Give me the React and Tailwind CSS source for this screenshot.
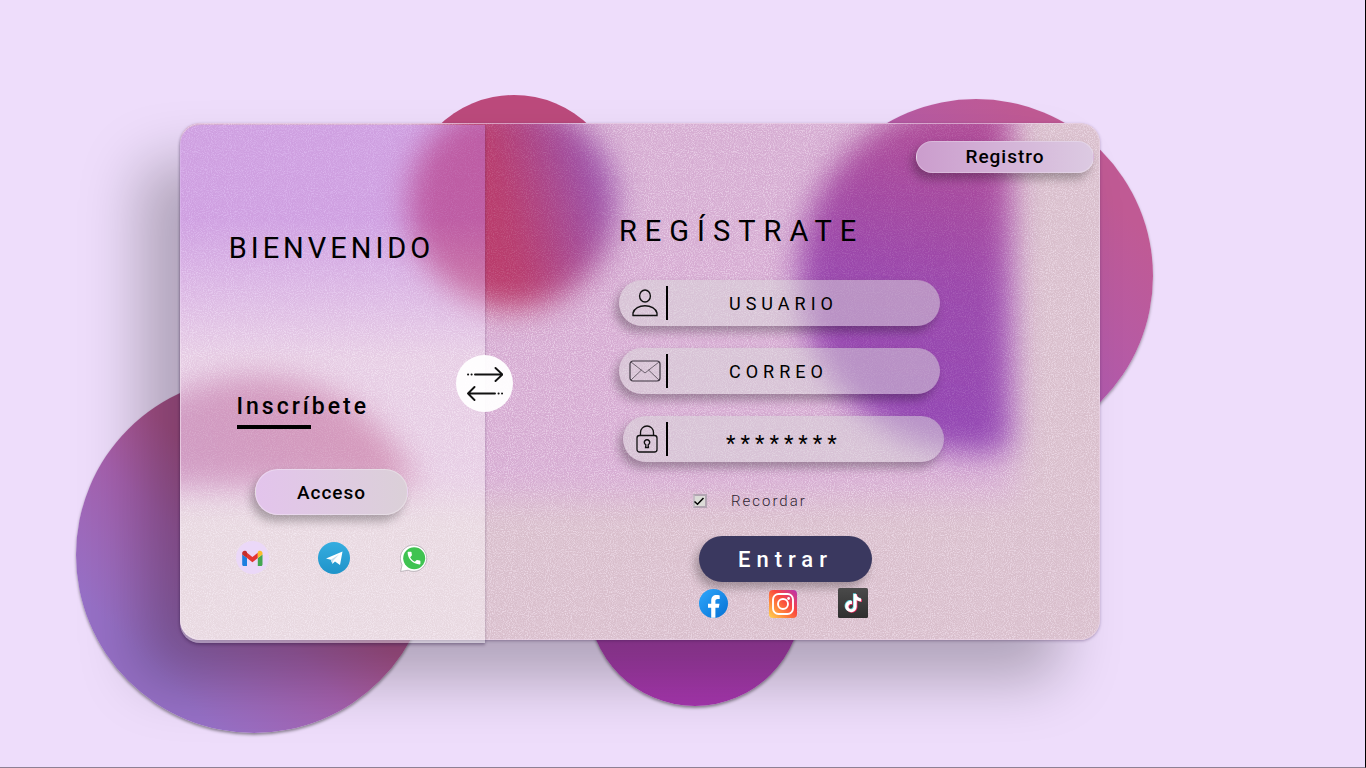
import React from "react";

const TIKTOK =
  "M12.525.02c1.31-.02 2.61-.01 3.91-.02.08 1.53.63 3.09 1.75 4.17 1.12 1.11 2.7 1.62 4.24 1.79v4.03c-1.44-.05-2.89-.35-4.2-.97-.57-.26-1.1-.59-1.62-.93-.01 2.92.01 5.84-.02 8.75-.08 1.4-.54 2.79-1.35 3.94-1.31 1.92-3.58 3.17-5.91 3.21-1.43.08-2.86-.31-4.08-1.03-2.02-1.19-3.44-3.37-3.65-5.71-.02-.5-.03-1-.01-1.49.18-1.9 1.12-3.72 2.58-4.96 1.66-1.44 3.98-2.13 6.15-1.72.02 1.48-.04 2.96-.04 4.44-.99-.32-2.15-.23-3.02.37-.63.41-1.11 1.04-1.36 1.75-.21.51-.15 1.07-.14 1.61.24 1.64 1.82 3.02 3.5 2.87 1.12-.01 2.19-.66 2.77-1.61.19-.33.4-.67.41-1.06.1-1.79.06-3.57.07-5.36.01-4.03-.01-8.05.02-12.07z";

// Frosted glass: blurred colour blobs under a fine white grain.
function Glass() {
  return (
    <div className="absolute inset-0 overflow-hidden rounded-[20px]" aria-hidden="true">
      <svg className="h-full w-full" viewBox="0 0 920 517" preserveAspectRatio="none">
        <defs>
          <filter id="soft" x="-20%" y="-20%" width="140%" height="140%" colorInterpolationFilters="sRGB">
            <feGaussianBlur stdDeviation="15" />
          </filter>
          <filter id="grain" x="0" y="0" width="100%" height="100%" colorInterpolationFilters="sRGB">
            <feTurbulence type="fractalNoise" baseFrequency="0.95" numOctaves="2" seed="4" />
            <feColorMatrix values="0 0 0 0 1  0 0 0 0 0.95  0 0 0 0 1  2.4 0 0 0 -1" />
          </filter>
          <linearGradient id="g1" x1="0.15" y1="0.65" x2="0.95" y2="0.45">
            <stop offset="0.4" stopColor="#b93c6c" />
            <stop offset="1" stopColor="#9a52ab" />
          </linearGradient>
          <linearGradient id="g2" x1="0.6" y1="0" x2="0.4" y2="1">
            <stop offset="0.05" stopColor="#b04b94" />
            <stop offset="0.55" stopColor="#9a48ac" />
            <stop offset="1" stopColor="#9247b4" />
          </linearGradient>
          <linearGradient id="g3" x1="0" y1="1" x2="1" y2="0.6">
            <stop offset="0" stopColor="#a24f9f" />
            <stop offset="1" stopColor="#b34683" />
          </linearGradient>
          <clipPath id="c2"><rect x="500" y="-60" width="330" height="392" /></clipPath>
          <clipPath id="c3"><rect x="-120" y="200" width="500" height="163" /></clipPath>
        </defs>
        <rect width="920" height="517" fill="#d9bfcc" />
        <rect x="-40" y="-40" width="875" height="415" fill="#d49ed8" opacity="0.55" filter="url(#soft)" />
        <rect width="920" height="517" filter="url(#grain)" opacity="0.45" />
        <circle cx="332" cy="81" r="104" fill="url(#g1)" filter="url(#soft)" />
        <g filter="url(#soft)">
          <circle cx="795" cy="153" r="177" fill="url(#g2)" clipPath="url(#c2)" />
        </g>
        <g filter="url(#soft)" opacity="0.85">
          <circle cx="73" cy="431" r="178" fill="url(#g3)" clipPath="url(#c3)" />
        </g>
        <rect width="920" height="517" filter="url(#grain)" opacity="0.14" />
        <rect x="0.5" y="0.5" width="919" height="516" rx="20" fill="none" stroke="#ecd5ea" strokeOpacity="0.6" />
      </svg>
    </div>
  );
}

function UserIcon() {
  return (
    <svg width="28" height="28" viewBox="0 0 28 28" fill="none" stroke="#111" strokeWidth="1.4" aria-hidden="true">
      <ellipse cx="14" cy="7" rx="5.4" ry="6" />
      <path d="M2 26.5v-2.5c1.2-4.6 6.300-7.300 12-7.300s10.800 2.700 12 7.300v2.500z" />
    </svg>
  );
}

function MailIcon() {
  return (
    <svg width="32" height="22" viewBox="0 0 32 22" fill="none" stroke="#3d3540" aria-hidden="true">
      <rect x="1" y="1" width="30" height="20" rx="3" strokeWidth="1.2" />
      <path d="M2 2l14 11L30 2M2 20l10.500-10M30 20L19.500 10" strokeWidth="0.7" />
    </svg>
  );
}

function LockIcon() {
  return (
    <svg width="22" height="28" viewBox="0 0 22 28" fill="none" stroke="#111" strokeWidth="1.3" aria-hidden="true">
      <rect x="1" y="10.500" width="20" height="16.500" rx="2.500" />
      <path d="M4.500 10.500V7.500a6.500 6.500 0 0 1 13 0v3" />
      <path d="M9.800 19.800a2.700 2.700 0 1 1 2.400 0l.2 2.700H9.600z" strokeWidth="1.4" />
    </svg>
  );
}

function GmailIcon() {
  return (
    <svg width="33" height="33" viewBox="0 0 33 33" aria-hidden="true">
      <circle cx="16.500" cy="16.500" r="16.500" fill="#ebd8f8" />
      <path d="M6.200 13.500l4.800 3.600v8H7.700c-.9 0-1.500-.6-1.500-1.500z" fill="#1e7fe0" />
      <path d="M26.500 13.500L21.800 17v8.100H25c.9 0 1.500-.6 1.500-1.500z" fill="#43a751" />
      <path d="M11 11.800l5.400 4.200 5.400-4.200V17l-5.400 4.300L11 17z" fill="#e53530" />
      <path d="M6.200 12c0-2.100 2.300-3 3.800-1.900l1 .8V17l-4.800-3.500z" fill="#c42d2d" />
      <path d="M26.500 12c0-2.100-2.300-3-3.800-1.900l-.9.8V17l4.700-3.500z" fill="#f9bd2c" />
    </svg>
  );
}

function TelegramIcon() {
  return (
    <svg width="32" height="32" viewBox="0 0 32 32" aria-hidden="true">
      <defs>
        <linearGradient id="tg" x1="0" y1="0" x2="0" y2="1">
          <stop stopColor="#35ade0" /><stop offset="1" stopColor="#1f93c9" />
        </linearGradient>
      </defs>
      <circle cx="16" cy="16" r="16" fill="url(#tg)" />
      <path d="M8 16.500L24.500 9.500 22 23l-5-3.500-2.500 2.300-1.700-4z" fill="#fff" />
      <path d="M12.700 17.800L21 12.500l-6 6.400-.5 3z" fill="#c9dfee" />
    </svg>
  );
}

function WhatsappIcon() {
  return (
    <svg width="28" height="28" viewBox="0 0 28 28" aria-hidden="true">
      <path d="M.6 27.500l1.500-6.700A13.200 13.200 0 1 1 8 26.200z" fill="#fff" stroke="#9a929a" strokeWidth="0.6" />
      <circle cx="14.200" cy="14.200" r="11" fill="#3fc351" />
      <path
        transform="translate(5.500 5.500) scale(.71)"
        d="M6.62 10.79c1.440 2.830 3.760 5.140 6.590 6.590l2.200-2.200c.27-.27.67-.36 1.020-.24 1.120.37 2.330.57 3.570.57.55 0 1 .45 1 1V20c0 .55-.45 1-1 1-9.390 0-17-7.610-17-17 0-.55.45-1 1-1h3.500c.55 0 1 .45 1 1 0 1.250.2 2.450.57 3.570.11.35.03.74-.25 1.020z"
        fill="#fff"
      />
    </svg>
  );
}

function FacebookIcon() {
  return (
    <svg width="29" height="29" viewBox="0 0 29 29" aria-hidden="true">
      <defs>
        <linearGradient id="fb" x1="0.1" y1="0.1" x2="0.9" y2="0.9">
          <stop stopColor="#2ba2f8" /><stop offset="1" stopColor="#0a76d8" />
        </linearGradient>
      </defs>
      <circle cx="14.500" cy="14.500" r="14.500" fill="url(#fb)" />
      <path d="M12.200 28.800V18.700H9v-4h3.200v-2.900c0-3.700 2-5.700 5.300-5.700 1.200 0 2.300.1 3.200.3v3.500h-2c-1.900 0-2.300 1-2.300 2.200v2.600h4.100l-.7 4h-3.400v10.100z" fill="#fff" />
    </svg>
  );
}

function InstagramIcon() {
  return (
    <svg width="28" height="28" viewBox="0 0 28 28" aria-hidden="true">
      <defs>
        <linearGradient id="ig" x1="0" y1="1" x2="1" y2="0">
          <stop stopColor="#ffd653" /><stop offset="0.3" stopColor="#ff8a3d" />
          <stop offset="0.6" stopColor="#f9453f" /><stop offset="1" stopColor="#b733b6" />
        </linearGradient>
      </defs>
      <rect width="28" height="28" rx="4" fill="url(#ig)" />
      <g fill="none" stroke="#fff" strokeWidth="1.900">
        <rect x="4" y="4" width="20" height="20" rx="5.500" />
        <circle cx="14" cy="14" r="5" />
      </g>
      <circle cx="19.600" cy="8.500" r="1.400" fill="#fff" />
    </svg>
  );
}

function TiktokIcon() {
  return (
    <svg width="30" height="30" viewBox="0 0 30 30" aria-hidden="true">
      <defs>
        <linearGradient id="tk" x1="0" y1="0" x2="0" y2="1">
          <stop stopColor="#4a4a4a" /><stop offset="1" stopColor="#2f2f2f" />
        </linearGradient>
      </defs>
      <rect width="30" height="30" rx="1.500" fill="url(#tk)" />
      <path d={TIKTOK} transform="translate(5.400 5.300) scale(.76)" fill="#5fd3dc" />
      <path d={TIKTOK} transform="translate(6.900 6.500) scale(.76)" fill="#ef2d63" />
      <path d={TIKTOK} transform="translate(6.100 5.900) scale(.76)" fill="#fff" />
    </svg>
  );
}

function SwapIcon() {
  return (
    <svg width="36" height="36" viewBox="0 0 36 36" fill="none" stroke="#111" strokeWidth="1.900" strokeLinecap="round" strokeLinejoin="round" aria-hidden="true">
      <path d="M8 8.500h27M28.500 2l7 6.500-7 6.500M28 27.500H1M7.500 21L1 27.500 7.500 34" />
      <path d="M1 8.500h.2M4.500 8.500h.2M31.500 27.500h.2M35 27.500h.2" />
    </svg>
  );
}

function Field({ id, label, icon, className = "", inputClass = "w-[274px] pl-[61px] text-[18px]", ...rest }) {
  return (
    <div className={`flex h-[46px] items-center rounded-full bg-[#d9d9d9]/50 shadow-[-4px_6px_10px_rgba(0,0,0,0.28)] ${className}`}>
      <label htmlFor={id} aria-label={label} className="flex flex-1 justify-center pl-1">{icon}</label>
      <input
        id={id}
        className={`h-[34px] flex-none border-l-2 border-black bg-transparent tracking-[5px] text-black placeholder:text-black placeholder:opacity-100 focus:outline-none ${inputClass}`}
        {...rest}
      />
    </div>
  );
}

function SocialLink({ label, className = "", children }) {
  return <a href="#" aria-label={label} className={className}>{children}</a>;
}

export default function App() {
  return (
    <main className="relative isolate min-h-screen overflow-hidden border-r border-b border-r-black border-b-[#8d8094] bg-[#eeddfb] pt-[123px] pr-[265px] pb-16 pl-[180px] font-['Roboto','Liberation_Sans',sans-serif] text-black">
      <div className="relative">
        <div className="absolute top-[-28px] left-[226px] size-[216px] rounded-full bg-[#bc4a7c]" />
        <div className="absolute top-[-24px] right-[-53px] size-[354px] rounded-full bg-linear-to-bl from-[#c05a94] from-20% to-[#ac5ab4] to-60% shadow-[0_2px_3px_rgba(0,0,0,0.35)]" />
        <div className="absolute top-[254px] left-[-104px] size-[356px] rounded-full bg-linear-to-tr from-[#9670c6] from-20% via-[#a661ae] via-42% to-[#ae5590] to-56% shadow-[0_2px_3px_rgba(0,0,0,0.4)]" />
        <div className="absolute top-[369px] left-[408px] size-[214px] rounded-full bg-linear-to-b from-[#b65ab0] to-[#a535ad] shadow-[0_2px_3px_rgba(0,0,0,0.4)]" />

        <section className="relative flex rounded-[20px] shadow-[-40px_40px_60px_rgba(0,0,0,0.26),0_1px_3px_rgba(60,30,90,0.35)]">
          <Glass />

          <aside className="relative mt-[2px] -mb-[3px] flex w-[305px] flex-none flex-col items-center rounded-l-[20px] bg-linear-to-b from-[#c48cf6]/40 from-18% to-white/40 to-45% pt-[105px] pr-[2px] shadow-[0_2px_3px_rgba(40,20,60,0.35)]">
            <h1 className="text-[29px] leading-9 tracking-[4px]">BIENVENIDO</h1>
            <div className="mt-[125px] w-[190px]">
              <h2 className="text-[23px] leading-8 font-medium tracking-[3px]">Inscríbete</h2>
              <div className="mt-[2px] h-1 w-[74px] bg-black" />
            </div>
            <button type="button" className="mt-10 h-[46px] w-[153px] rounded-full border border-white/30 bg-linear-to-r from-[#e3c4ec] to-[#dbd0d8] pt-[2px] text-[19px] font-medium tracking-[1px] shadow-[-4px_6px_10px_rgba(0,0,0,0.28)]">
              Acceso
            </button>
            <nav aria-label="Contacto" className="mt-[26px] flex w-[192px] items-center justify-between">
              <SocialLink label="Gmail"><GmailIcon /></SocialLink>
              <SocialLink label="Telegram"><TelegramIcon /></SocialLink>
              <SocialLink label="WhatsApp"><WhatsappIcon /></SocialLink>
            </nav>
          </aside>

          <div className="relative flex min-w-0 flex-1 flex-col pb-[22px]">
            <button type="button" className="mt-[18px] mr-[6px] h-8 w-[178px] self-end rounded-full border border-white/25 bg-linear-to-r from-[#cb9dcd] to-[#dccae2] text-[19px] leading-5 font-medium tracking-[1px] shadow-[-4px_6px_10px_rgba(0,0,0,0.28)]">
              Registro
            </button>
            <form className="mt-10 ml-[134px] w-[321px]" onSubmit={(e) => e.preventDefault()}>
              <h2 className="text-[29px] leading-9 tracking-[8px]">REGÍSTRATE</h2>
              <div className="mt-[31px] flex flex-col gap-[22px]">
                <Field id="usuario" label="Usuario" icon={<UserIcon />} placeholder="USUARIO" />
                <Field id="correo" label="Correo" icon={<MailIcon />} placeholder="CORREO" />
                <Field id="clave" label="Contraseña" icon={<LockIcon />} className="-mr-1 ml-1" inputClass="w-[278px] pl-[58px] pt-2 text-[22px]" defaultValue="********" />
              </div>
              <div className="mt-[29px] flex h-5 items-center pl-[74px]">
                <span className="relative flex">
                  <input id="recordar" type="checkbox" defaultChecked className="peer size-[14px] appearance-none border-2 border-[#b3a5b3] border-l-[#c6bcc6] bg-[#dcdcd8]" />
                  <svg className="pointer-events-none absolute inset-0 hidden peer-checked:block" width="14" height="14" viewBox="0 0 14 14" fill="none" stroke="#000" strokeWidth="1.500" aria-hidden="true">
                    <path d="M1.500 7.500l3 2.800L10.500 4" />
                  </svg>
                </span>
                <label htmlFor="recordar" className="ml-6 text-[15px] font-light tracking-[2px] text-[#2e2430]">Recordar</label>
              </div>
              <button type="submit" className="mt-[25px] ml-20 h-[46px] w-[173px] rounded-full bg-[#3a385f] text-[22px] font-medium tracking-[6px] text-white shadow-[-4px_6px_10px_rgba(0,0,0,0.28)]">
                Entrar
              </button>
              <nav aria-label="Redes sociales" className="mt-[6px] ml-20 flex w-[169px] items-center justify-between">
                <SocialLink label="Facebook"><FacebookIcon /></SocialLink>
                <SocialLink label="Instagram" className="self-end"><InstagramIcon /></SocialLink>
                <SocialLink label="TikTok"><TiktokIcon /></SocialLink>
              </nav>
            </form>
          </div>

          <button type="button" aria-label="Cambiar" className="absolute top-[232px] left-[276px] flex size-[57px] items-center justify-center rounded-full bg-white/95">
            <SwapIcon />
          </button>
        </section>
      </div>
    </main>
  );
}
